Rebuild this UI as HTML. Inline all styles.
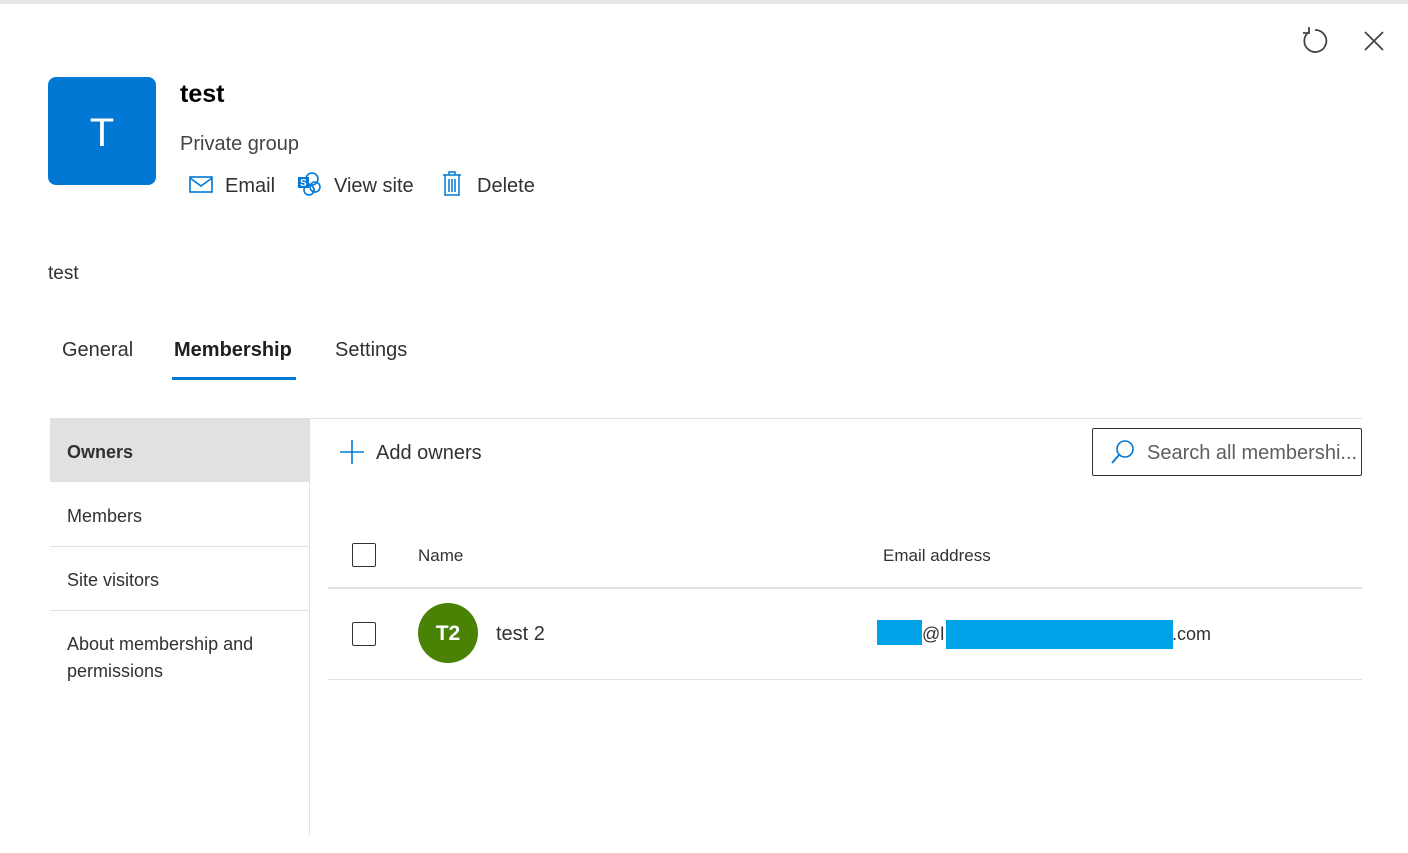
<!DOCTYPE html>
<html><head><style>
body{margin:0;width:1408px;height:853px;background:#fff;font-family:"Segoe UI","Liberation Sans",sans-serif;color:#323130;position:relative;overflow:hidden}
.a{position:absolute}
</style></head><body>
<div class="a" style="left:0;top:0;width:1408px;height:4px;background:#e6e6e6"></div>
<svg class="a" style="left:1300px;top:27px" width="28" height="28" viewBox="0 0 28 28"><path d="M9 5 A11 11 0 1 0 15 3" fill="none" stroke="#444" stroke-width="1.8"/><path d="M9 0 V6 H3" fill="none" stroke="#444" stroke-width="1.8"/></svg>
<svg class="a" style="left:1364px;top:31px" width="20" height="20"><path d="M1 1L19 19M19 1L1 19" stroke="#444" stroke-width="1.8"/></svg>
<div class="a" style="left:48px;top:77px;width:108px;height:108px;background:#0078d4;border-radius:8px;color:#fff;font-size:40px;line-height:112px;text-align:center">T</div>
<div class="a" style="left:180px;top:80px;font-size:25px;font-weight:bold;color:#000">test</div>
<div class="a" style="left:180px;top:133px;font-size:20px;color:#444">Private group</div>
<svg class="a" style="left:189px;top:176px" width="24" height="18"><rect x="1" y="1" width="22" height="15" fill="none" stroke="#0078d4" stroke-width="1.6"/><path d="M1 2L12 10L23 2" fill="none" stroke="#0078d4" stroke-width="1.6"/></svg>
<div class="a" style="left:225px;top:175px;font-size:20px">Email</div>
<svg class="a" style="left:297px;top:171px" width="26" height="26"><circle cx="15" cy="8" r="6" fill="none" stroke="#0078d4" stroke-width="1.6"/><circle cx="18" cy="16" r="5" fill="none" stroke="#0078d4" stroke-width="1.6"/><circle cx="12" cy="19" r="5" fill="none" stroke="#0078d4" stroke-width="1.6"/><rect x="1" y="6" width="11" height="11" fill="#0078d4"/><text x="3" y="15" font-size="10" font-weight="bold" fill="#fff" font-family="Liberation Sans">S</text></svg>
<div class="a" style="left:334px;top:175px;font-size:20px">View site</div>
<svg class="a" style="left:441px;top:171px" width="22" height="26"><path d="M2 4H20M8 4V1H14V4M4 4V24H18V4M8 8V21M11 8V21M14 8V21" fill="none" stroke="#0078d4" stroke-width="1.5"/></svg>
<div class="a" style="left:477px;top:175px;font-size:20px">Delete</div>
<div class="a" style="left:48px;top:263px;font-size:19px">test</div>
<div class="a" style="left:62px;top:339px;font-size:20px">General</div>
<div class="a" style="left:174px;top:339px;font-size:20px;color:#201f1e;font-weight:600">Membership</div>
<div class="a" style="left:172px;top:377px;width:124px;height:3px;background:#0078d4"></div>
<div class="a" style="left:335px;top:339px;font-size:20px">Settings</div>
<div class="a" style="left:50px;top:418px;width:1312px;height:1px;background:#e1e1e1"></div>
<div class="a" style="left:50px;top:419px;width:259px;height:63px;background:#e1e1e1"></div>
<div class="a" style="left:309px;top:419px;width:1px;height:416px;background:#e1e1e1"></div>
<div class="a" style="left:67px;top:442px;font-size:18px;font-weight:600;color:#323130">Owners</div>
<div class="a" style="left:67px;top:506px;font-size:18px">Members</div>
<div class="a" style="left:50px;top:546px;width:259px;height:1px;background:#e1e1e1"></div>
<div class="a" style="left:67px;top:570px;font-size:18px">Site visitors</div>
<div class="a" style="left:50px;top:610px;width:259px;height:1px;background:#e1e1e1"></div>
<div class="a" style="left:67px;top:631px;font-size:18px;line-height:27px;width:230px">About membership and permissions</div>
<svg class="a" style="left:340px;top:440px" width="24" height="24"><path d="M12 0V24M0 12H24" stroke="#0078d4" stroke-width="1.6"/></svg>
<div class="a" style="left:376px;top:442px;font-size:20px">Add owners</div>
<div class="a" style="left:1092px;top:428px;width:268px;height:46px;border:1px solid #323130;border-radius:2px"></div>
<svg class="a" style="left:1110px;top:439px" width="28" height="26"><circle cx="15" cy="10" r="8" fill="none" stroke="#0078d4" stroke-width="1.6"/><path d="M9 16L2 24" stroke="#0078d4" stroke-width="1.8"/></svg>
<div class="a" style="left:1147px;top:442px;font-size:20px;color:#605e5c">Search all membershi...</div>
<div class="a" style="left:352px;top:543px;width:22px;height:22px;border:1px solid #323130;border-radius:2px"></div>
<div class="a" style="left:418px;top:546px;font-size:17px">Name</div>
<div class="a" style="left:883px;top:546px;font-size:17px">Email address</div>
<div class="a" style="left:328px;top:587px;width:1034px;height:2px;background:#e1e1e1"></div>
<div class="a" style="left:352px;top:622px;width:22px;height:22px;border:1px solid #323130;border-radius:2px"></div>
<div class="a" style="left:418px;top:603px;width:60px;height:60px;border-radius:50%;background:#498205;color:#fff;font-size:21px;font-weight:600;line-height:62px;text-align:center">T2</div>
<div class="a" style="left:496px;top:623px;font-size:20px">test 2</div>
<div class="a" style="left:912px;top:624px;font-size:18px">2@l</div>
<div class="a" style="left:1172px;top:624px;font-size:18px">.com</div>
<div class="a" style="left:877px;top:620px;width:45px;height:25px;background:#00a2e8"></div>
<div class="a" style="left:946px;top:620px;width:227px;height:29px;background:#00a2e8"></div>
<div class="a" style="left:328px;top:679px;width:1034px;height:1px;background:#e1e1e1"></div>
</body></html>
